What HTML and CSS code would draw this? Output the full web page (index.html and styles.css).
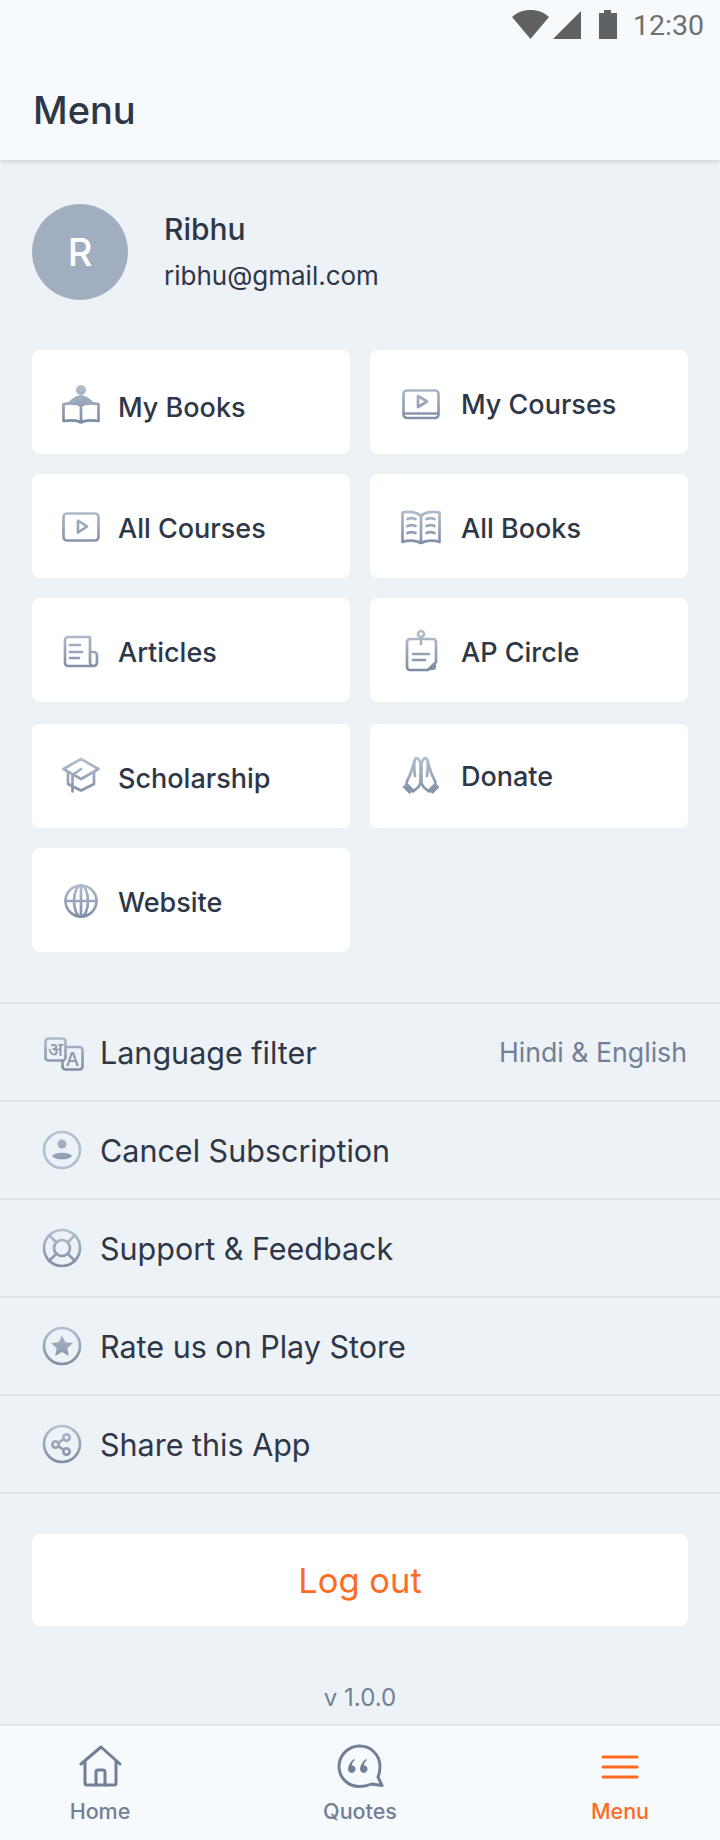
FILE: index.html
```html
<!DOCTYPE html>
<html lang="en">
<head>
    <meta charset="UTF-8">
    <meta name="viewport" content="width=device-width, initial-scale=1.0">
    <title>Menu</title>
    <link rel="stylesheet" href="styles.css">
</head>
<body>
    <!-- shared gradient for the menu icons -->
    <svg class="defs" aria-hidden="true">
        <defs>
            <linearGradient id="ig" gradientUnits="userSpaceOnUse" x1="0" y1="6" x2="0" y2="44">
                <stop offset="0" stop-color="#b4c0cf"/>
                <stop offset="1" stop-color="#7d8ca3"/>
            </linearGradient>
        </defs>
    </svg>

    <header class="header">
        <div class="status">
            <svg class="status-icons" viewBox="0 0 106 30" width="106" height="30">
                <path d="M0 7C5 2.500 11 0 18.500 0S32 2.500 37 7L18.500 29Z"/>
                <path d="M69 1V29H41Z"/>
                <path d="M87 3H92V0H99V3H105V29H87Z"/>
            </svg>
            <span class="time">12:30</span>
        </div>
        <h1 class="title">Menu</h1>
    </header>

    <section class="profile">
        <div class="avatar">R</div>
        <div class="profile-info">
            <div class="profile-name">Ribhu</div>
            <div class="profile-mail">ribhu@gmail.com</div>
        </div>
    </section>

    <section class="cards">
        <a class="card">
            <svg class="icon" viewBox="0 0 48 48"><circle class="solid" cx="24" cy="12" r="5"/><path class="solid" d="M24 17C20 17 14 21 11 25C16 24 21 25 24 27C27 25 32 24 37 25C34 21 28 17 24 17Z"/><path d="M24 28C20 25 13 25 6.500 26V43C13 42 20 42 24 44.500C28 42 35 42 41.500 43V26C35 25 28 25 24 28V44.500"/></svg>
            <span class="card-label lower">My Books</span>
        </a>
        <a class="card">
            <svg class="icon" viewBox="0 0 48 48"><rect x="6.500" y="12.500" width="35" height="27.500" rx="3.500"/><path d="M6.500 35.500H41.500"/><path d="M21 18L30 23.500L21 29Z"/></svg>
            <span class="card-label">My Courses</span>
        </a>
        <a class="card">
            <svg class="icon" viewBox="0 0 48 48"><rect x="6.500" y="11.500" width="35" height="27" rx="3.500"/><path d="M21 18.500L30 24.500L21 30.500Z"/></svg>
            <span class="card-label">All Courses</span>
        </a>
        <a class="card">
            <svg class="icon" viewBox="0 0 48 48"><path d="M24 14C20 10 12 9 5.500 10.500V40C11 38 19 38 24 41C29 38 37 38 42.500 40V10.500C36 9 28 10 24 14V41"/><path d="M10.500 17C13 16 16 16 18.500 17M10.500 24C13 23 16 23 18.500 24M10.500 31C13 30 16 30 18.500 31M29.500 17C32 16 35 16 37.500 17M29.500 24C32 23 35 23 37.500 24M29.500 31C32 30 35 30 37.500 31"/></svg>
            <span class="card-label">All Books</span>
        </a>
        <a class="card">
            <svg class="icon" viewBox="0 0 48 48"><path d="M33 26H36.500A3.500 3.500 0 0 1 40 29.500V36.500A3.500 3.500 0 0 1 36.500 40H11A3 3 0 0 1 8 37V14A3 3 0 0 1 11 11H33V36.500A3.500 3.500 0 0 0 36.500 40"/><path d="M13 19H23M13 26H25M13 32H22"/></svg>
            <span class="card-label">Articles</span>
        </a>
        <a class="card">
            <svg class="icon" viewBox="0 0 48 48"><circle cx="24" cy="8" r="3"/><path d="M24 11V18M31 44H13A3 3 0 0 1 10 41V16A3 3 0 0 1 13 13H36A3 3 0 0 1 39 16V36Z"/><path d="M16 28H32M16 34H28"/><path class="solid" d="M39 36L31 44H36A3 3 0 0 0 39 41Z"/></svg>
            <span class="card-label">AP Circle</span>
        </a>
        <a class="card row-wide">
            <svg class="icon" viewBox="0 0 48 48"><path d="M24 7L6.500 17L24 27L41.500 17Z"/><path d="M11 20V32L24 38.500L37 32V20"/><path d="M24 17L15.500 23V39.500"/></svg>
            <span class="card-label">Scholarship</span>
        </a>
        <a class="card row-wide">
            <svg class="icon" viewBox="0 0 48 48"><path d="M23.500 12C23 8 20 4.500 18 7C16 12 15 20 11 27L9.500 30.500M23.500 12V29C23.500 33 22 35 19 37L16 39.500M18 7C17 12 17 18 18 24"/><path d="M24.500 12C25 8 28 4.500 30 7C32 12 33 20 37 27L38.500 30.500M24.500 12V29C24.500 33 26 35 29 37L32 39.500M30 7C31 12 31 18 30 24"/><path class="solid" d="M5.500 35L10 30.500L17 37.500L12.500 42ZM42.500 35L38 30.500L31 37.500L35.500 42Z"/></svg>
            <span class="card-label higher">Donate</span>
        </a>
        <a class="card">
            <svg class="icon" viewBox="0 0 48 48"><circle cx="24" cy="25" r="15.500"/><ellipse cx="24" cy="25" rx="7" ry="15.500"/><path d="M8.500 25H39.500M24 9.500V40.500"/></svg>
            <span class="card-label">Website</span>
        </a>
    </section>

    <section class="list">
        <div class="row">
            <svg class="icon" viewBox="0 0 48 48"><rect class="bg" x="24.500" y="19" width="20" height="22.500" rx="3"/><rect class="bg" x="7.500" y="10.500" width="20" height="22" rx="3"/><text class="icon-text" x="17.500" y="28" text-anchor="middle">अ</text><text class="icon-text" x="34.500" y="38" text-anchor="middle">A</text></svg>
            <span class="row-label">Language filter</span>
            <span class="row-value">Hindi &amp; English</span>
        </div>
        <div class="row">
            <svg class="icon" viewBox="0 0 48 48"><circle class="light" cx="24" cy="24" r="18"/><circle class="solid" cx="24" cy="18" r="4.500"/><path class="solid" d="M14 30C17 25.500 31 25.500 34 30C31 34.500 17 34.500 14 30Z"/></svg>
            <span class="row-label">Cancel Subscription</span>
        </div>
        <div class="row">
            <svg class="icon" viewBox="0 0 48 48"><circle cx="24" cy="24" r="18"/><circle cx="24" cy="24" r="8"/><path d="M11 11L18.500 18.500M37 11L29.500 18.500M11 37L18.500 29.500M37 37L29.500 29.500"/></svg>
            <span class="row-label">Support &amp; Feedback</span>
        </div>
        <div class="row">
            <svg class="icon" viewBox="0 0 48 48"><circle cx="24" cy="24" r="18"/><path class="solid" d="M24 13L27.300 20.200L35 21.100L29.300 26.300L30.800 34L24 30.100L17.200 34L18.700 26.300L13 21.100L20.700 20.200Z"/></svg>
            <span class="row-label">Rate us on Play Store</span>
        </div>
        <div class="row">
            <svg class="icon" viewBox="0 0 48 48"><circle cx="24" cy="24" r="18"/><circle cx="28.500" cy="17.500" r="3.200"/><circle cx="17.500" cy="24.500" r="3.200"/><circle cx="28.500" cy="31.500" r="3.200"/><path d="M25.800 19.200L20.200 22.800M20.200 26.200L25.800 29.800"/></svg>
            <span class="row-label">Share this App</span>
        </div>
    </section>

    <button class="logout">Log out</button>
    <div class="version">v 1.0.0</div>

    <nav class="tabs">
        <a class="tab">
            <svg class="tab-icon" viewBox="0 0 48 44"><path d="M5 20L25 3L44 20M9 17V39A2 2 0 0 0 11 41H38A2 2 0 0 0 40 39V17"/><path d="M20 41V28A2 2 0 0 1 22 26H27A2 2 0 0 1 29 28V41"/></svg>
            <span>Home</span>
        </a>
        <a class="tab">
            <svg class="tab-icon" viewBox="0 0 48 44"><path d="M46 41.500L35.500 40C30 42.500 26 42.500 23 42.500C12 42.500 3 33.500 3 22.500S12 2 23.500 2S44 11 44 22.500C44 26 43.500 30 42 33Z"/><path class="fill" d="M18 15C14 18 12 21.500 12 25.500A3.800 3.800 0 1 0 18 22C17 21.500 16.500 21.500 15.800 21.800C16 19.500 17 17.500 19 16ZM30 15C26 18 24 21.500 24 25.500A3.800 3.800 0 1 0 30 22C29 21.500 28.500 21.500 27.800 21.800C28 19.500 29 17.500 31 16Z"/></svg>
            <span>Quotes</span>
        </a>
        <a class="tab active">
            <svg class="tab-icon" viewBox="0 0 48 44"><path d="M7 13H41M7 23H41M7 33H41"/></svg>
            <span>Menu</span>
        </a>
    </nav>
</body>
</html>
```

FILE: styles.css
```css
/* Basic Styling */
* {
    box-sizing: border-box;
}
body {
    margin: 0;
    width: 720px;
    height: 1840px;
    display: flex;
    flex-direction: column;
    overflow: hidden;
    background-color: #edf2f7;
    color: #2d3748;
    font-family: Inter, "Liberation Sans", sans-serif;
}
.defs {
    display: block;
    width: 0;
    height: 0;
}

/* Header */
.header {
    height: 160px;
    flex-shrink: 0;
    padding: 10px 16px 0 33px;
    background-color: #f7fafc;
    box-shadow: 0 2px 5px rgba(0, 0, 0, 0.12);
}
.status {
    height: 30px;
    display: flex;
    justify-content: flex-end;
    align-items: center;
    gap: 15px;
}
.status-icons {
    fill: #616161;
}
.time {
    font-family: Roboto, sans-serif;
    font-size: 28.5px;
    color: #707070;
}
.title {
    margin: 47px 0 0;
    font-size: 38px;
    line-height: 46px;
    font-weight: 500;
}

/* Profile */
.profile {
    margin: 44px 0 50px;
    padding-left: 32px;
    display: flex;
    align-items: center;
    gap: 36px;
}
.avatar {
    width: 96px;
    height: 96px;
    border-radius: 50%;
    background-color: #a0aec0;
    color: #fff;
    font-size: 38px;
    font-weight: 500;
    display: flex;
    justify-content: center;
    align-items: center;
}
.profile-name {
    font-size: 30px;
    font-weight: 500;
    line-height: 36px;
    margin-top: -2px;
}
.profile-mail {
    margin-top: 13px;
    font-size: 26px;
    line-height: 32px;
}

/* Card grid */
.cards {
    padding: 0 32px;
    display: grid;
    grid-template-columns: 318px 318px;
    grid-template-rows: 104px 104px 104px 106px 104px;
    column-gap: 20px;
    row-gap: 20px;
}
.card {
    padding-left: 25px;
    display: flex;
    align-items: center;
    gap: 13px;
    background-color: #fff;
    border-radius: 8px;
}
.card:nth-child(even) {
    padding-left: 27px;
    gap: 16px;
}
.row-wide {
    margin-top: 2px;
}
.card-label {
    margin-top: 4px;
    font-size: 27px;
    font-weight: 500;
}
.lower {
    margin-top: 10px;
}
.higher {
    margin-top: 0;
}
.icon {
    width: 48px;
    height: 48px;
    flex-shrink: 0;
    overflow: visible;
    fill: none;
    stroke: url(#ig);
    stroke-width: 2.7;
    stroke-linejoin: round;
    stroke-linecap: round;
}
.icon .solid {
    fill: url(#ig);
    stroke: none;
}
.icon .light {
    stroke: #b4c0cf;
}
.icon .bg {
    fill: #edf2f7;
}
.icon-text {
    fill: #8b99ae;
    stroke: none;
    font-size: 19px;
    font-weight: 500;
    font-family: Inter, "Noto Sans", sans-serif;
}

/* Settings list */
.list {
    margin-top: 50px;
    border-top: 2px solid #dde4ea;
}
.row {
    height: 98px;
    padding: 0 33px 0 38px;
    display: flex;
    align-items: center;
    gap: 14px;
    border-bottom: 2px solid #dde4ea;
}
.row-label {
    font-size: 30.5px;
}
.row-value {
    margin-left: auto;
    font-size: 26.7px;
    color: #718096;
}

/* Log out */
.logout {
    margin: 40px 32px 0;
    height: 92px;
    flex-shrink: 0;
    background-color: #fff;
    border: none;
    border-radius: 8px;
    color: #ff6b1f;
    font-family: inherit;
    font-size: 34.5px;
}
.version {
    margin-top: 57px;
    text-align: center;
    font-size: 24px;
    color: #718096;
}

/* Bottom tabs */
.tabs {
    margin-top: auto;
    height: 116px;
    padding: 18px 40px 0;
    display: flex;
    justify-content: space-between;
    background-color: #f7fafc;
    border-top: 2px solid #dfe4e9;
}
.tab {
    width: 120px;
    display: flex;
    flex-direction: column;
    align-items: center;
    gap: 10px;
    color: #718096;
    font-size: 21.5px;
    font-weight: 500;
}
.tab-icon {
    width: 48px;
    height: 44px;
    fill: none;
    stroke: #718096;
    stroke-width: 3;
    stroke-linecap: round;
    stroke-linejoin: round;
}
.tab-icon .fill {
    fill: #718096;
    stroke: none;
}
.active {
    color: #ff6b1f;
}
.active .tab-icon {
    stroke: #ff6b1f;
}
```
